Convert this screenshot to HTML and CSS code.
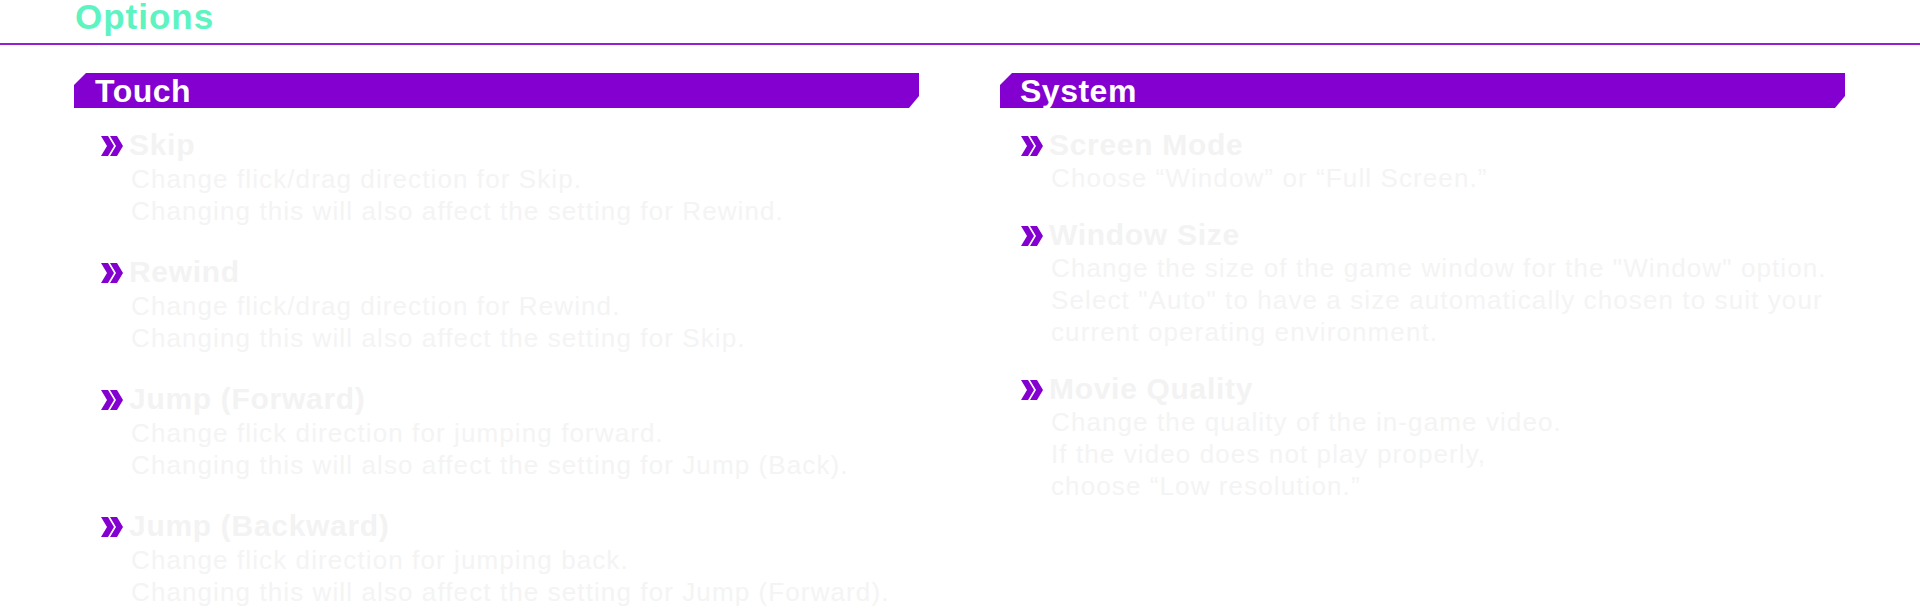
FILE: index.html
```html
<!DOCTYPE html>
<html lang="en">
<head>
    <meta charset="UTF-8">
    <meta name="viewport" content="width=device-width, initial-scale=1.0">
    <title>Options</title>
    <link rel="stylesheet" href="styles.css">
</head>
<body>
    <!-- Page title -->
    <div class="page-head">
        <h1 class="page-title">Options</h1>
    </div>

    <div class="columns">
        <!-- Touch settings -->
        <section class="section section-touch">
            <h2 class="section-bar">Touch</h2>
            <div class="item-list">
                <div class="item">
                    <svg class="item-arrow" viewBox="0 0 22 20"><path d="M0 0H7L13 10L7 20H0L6 10Z M9 0H16L22 10L16 20H9L15 10Z"/></svg>
                    <h3 class="item-title">Skip</h3>
                    <p class="item-desc">Change flick/drag direction for Skip.<br>Changing this will also affect the setting for Rewind.</p>
                </div>
                <div class="item">
                    <svg class="item-arrow" viewBox="0 0 22 20"><path d="M0 0H7L13 10L7 20H0L6 10Z M9 0H16L22 10L16 20H9L15 10Z"/></svg>
                    <h3 class="item-title">Rewind</h3>
                    <p class="item-desc">Change flick/drag direction for Rewind.<br>Changing this will also affect the setting for Skip.</p>
                </div>
                <div class="item">
                    <svg class="item-arrow" viewBox="0 0 22 20"><path d="M0 0H7L13 10L7 20H0L6 10Z M9 0H16L22 10L16 20H9L15 10Z"/></svg>
                    <h3 class="item-title">Jump (Forward)</h3>
                    <p class="item-desc">Change flick direction for jumping forward.<br>Changing this will also affect the setting for Jump (Back).</p>
                </div>
                <div class="item">
                    <svg class="item-arrow" viewBox="0 0 22 20"><path d="M0 0H7L13 10L7 20H0L6 10Z M9 0H16L22 10L16 20H9L15 10Z"/></svg>
                    <h3 class="item-title">Jump (Backward)</h3>
                    <p class="item-desc">Change flick direction for jumping back.<br>Changing this will also affect the setting for Jump (Forward).</p>
                </div>
            </div>
        </section>

        <!-- System settings -->
        <section class="section section-system">
            <h2 class="section-bar">System</h2>
            <div class="item-list">
                <div class="item">
                    <svg class="item-arrow" viewBox="0 0 22 20"><path d="M0 0H7L13 10L7 20H0L6 10Z M9 0H16L22 10L16 20H9L15 10Z"/></svg>
                    <h3 class="item-title">Screen Mode</h3>
                    <p class="item-desc">Choose “Window” or “Full Screen.”</p>
                </div>
                <div class="item">
                    <svg class="item-arrow" viewBox="0 0 22 20"><path d="M0 0H7L13 10L7 20H0L6 10Z M9 0H16L22 10L16 20H9L15 10Z"/></svg>
                    <h3 class="item-title">Window Size</h3>
                    <p class="item-desc">Change the size of the game window for the "Window" option.<br>Select "Auto" to have a size automatically chosen to suit your<br>current operating environment.</p>
                </div>
                <div class="item">
                    <svg class="item-arrow" viewBox="0 0 22 20"><path d="M0 0H7L13 10L7 20H0L6 10Z M9 0H16L22 10L16 20H9L15 10Z"/></svg>
                    <h3 class="item-title">Movie Quality</h3>
                    <p class="item-desc">Change the quality of the in-game video.<br>If the video does not play properly,<br>choose “Low resolution.”</p>
                </div>
            </div>
        </section>
    </div>
</body>
</html>
```

FILE: styles.css
```css
body {
    font-family: "Liberation Sans", Arial, sans-serif;
    background-color: #ffffff;
    margin: 0;
    overflow: hidden;
}

/* Page title */
.page-head {
    height: 43px;
    border-bottom: 2px solid #9420d6;
    padding-left: 75px;
}
.page-title {
    margin: 0;
    font-size: 35px;
    line-height: 33px;
    font-weight: bold;
    letter-spacing: 1px;
    color: #5ef4c2;
}

/* Columns */
.columns {
    display: flex;
    gap: 81px;
    padding-left: 74px;
    margin-top: 28px;
}
.section {
    width: 845px;
}
.section-bar {
    margin: 0;
    height: 35px;
    padding: 1px 0 0 21px;
    box-sizing: border-box;
    background-color: #8300d0;
    color: #ffffff;
    font-size: 32px;
    line-height: 35px;
    letter-spacing: 0.5px;
    clip-path: polygon(12px 0, 100% 0, 100% calc(100% - 12px), calc(100% - 10px) 100%, 0 100%, 0 12px);
}
.section-system .section-bar {
    padding-left: 20px;
}

/* Items */
.item-list {
    display: flex;
    flex-direction: column;
    gap: 30px;
    margin-top: 22px;
    padding-left: 27px;
}
.section-system .item-list {
    gap: 26px;
    padding-left: 21px;
}
.item {
    display: grid;
    grid-template-columns: 28px auto;
    align-items: center;
}
.item-arrow {
    width: 22px;
    height: 20px;
    fill: #8300d0;
    margin-top: 1px;
}
.item-title {
    margin: 0;
    font-size: 30px;
    line-height: 30px;
    letter-spacing: 0.7px;
    color: #f3f3f3;
}
.item-desc {
    grid-column: 2;
    margin: 3px 0 0 2px;
    font-size: 26px;
    line-height: 32px;
    letter-spacing: 1.1px;
    color: #f4f4f4;
    white-space: nowrap;
}
.section-system .item-desc {
    margin-top: 2px;
}
```
